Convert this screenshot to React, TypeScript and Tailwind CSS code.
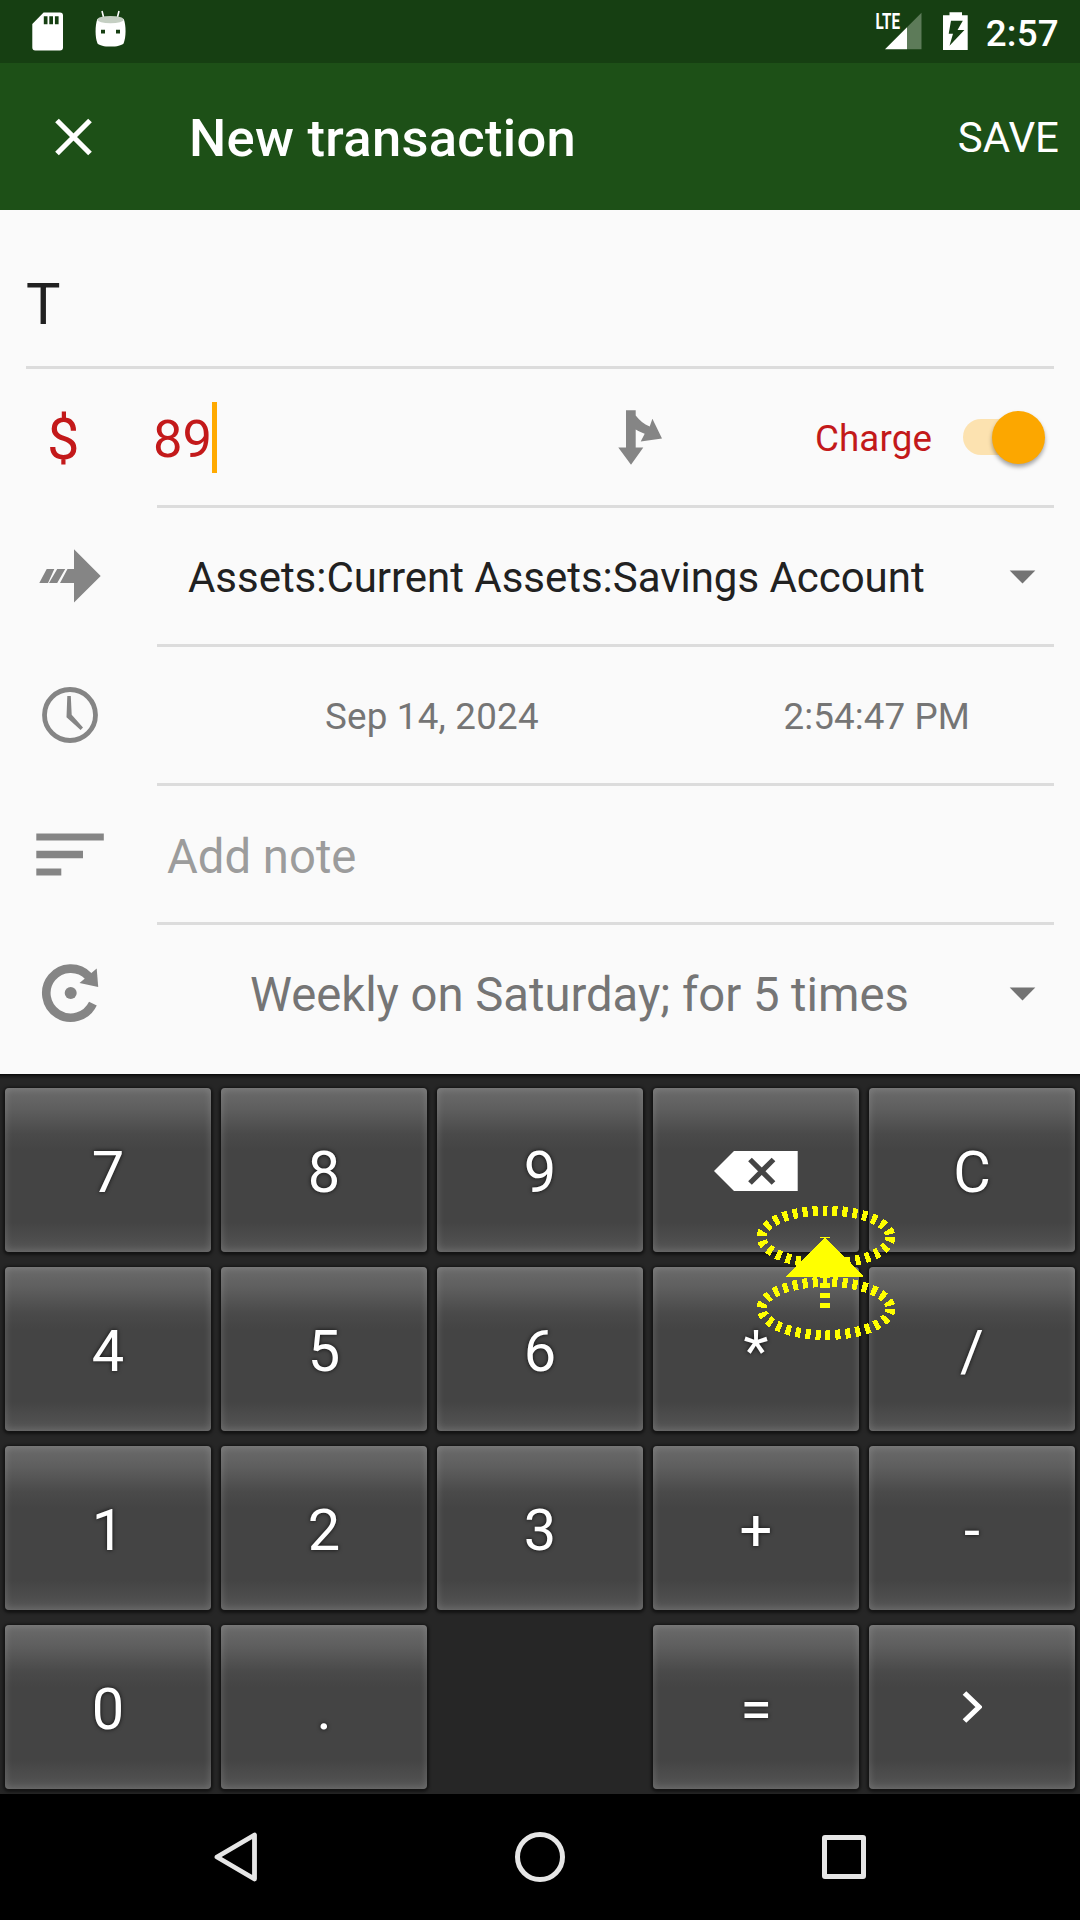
import type { ReactNode } from "react";

function StatusBar() {
  return (
    <div className="flex h-[63px] items-start bg-[#163f12] text-white">
      <svg className="ml-8 mt-3 h-[39px] w-8 shrink-0" viewBox="32 12 32 39">
        <path
          fill="#fff"
          fillRule="evenodd"
          d="M43.6 12.6H60a3 3 0 0 1 3 3V47.500a3 3 0 0 1-3 3H35.300a3 3 0 0 1-3-3V24zM43.800 16.300v7.900h3.700v-7.900zM49.300 16.300v7.900H53v-7.900zM54.900 16.300v7.900h3.700v-7.900z"
        />
      </svg>
      <svg className="ml-[30px] mt-2.5 h-[38px] w-[34px] shrink-0" viewBox="94 10 34 38">
        <path d="M102 11l2 8M119 11l-2 8" stroke="#fff" strokeWidth="1.600" />
        <path
          fill="#fff"
          fillRule="evenodd"
          d="M97.300 19C95 26 95 37 97.500 43.500 99.500 45.500 104 46.600 110.500 46.600S121.500 45.500 123.600 43.500C126.200 37 126.200 26 123.800 19zM101 29.700h4v3.700h-4zM116 29.700h4v3.700h-4z"
        />
        <ellipse cx="110.500" cy="19.600" rx="13.300" ry="3.700" fill="#c5cfc3" />
      </svg>
      <div className="flex-1" />
      <svg className="mt-1 h-[47px] w-[54px] shrink-0" viewBox="868 4 54 47">
        <path d="M907 27.300L921.500 12.800V49.300H907z" fill="#5d7b59" />
        <path d="M885 49.300L907 27.300V49.300z" fill="#fff" />
        <text
          x="875.500"
          y="29.200"
          textLength="24.500"
          lengthAdjust="spacingAndGlyphs"
          className="fill-white font-[Roboto] text-[22px] font-bold"
        >
          LTE
        </text>
      </svg>
      <svg className="ml-[21px] mt-3 h-[39px] w-[26px] shrink-0" viewBox="943 12 26 39">
        <path
          fill="#fff"
          fillRule="evenodd"
          d="M949.500 12.200h12.500v3h5.700V50H943V15.200h6.500zM951 20.700L948.700 33.700H953L949.500 45.700 964.400 30H957.500L962.800 20.700z"
        />
      </svg>
      <span className="ml-[17px] mr-[21px] mt-[13px] text-[36.75px] leading-[42px] font-medium tracking-[0.25px]">2:57</span>
    </div>
  );
}

function AppBar() {
  return (
    <div className="flex h-[147px] items-center bg-[#1d5017] text-white">
      <svg className="ml-[54px] h-[38px] w-[38px] shrink-0" viewBox="54 117.500 38 38">
        <path d="M57 120l33 33M90 120l-33 33" stroke="#fff" strokeWidth="5.200" fill="none" />
      </svg>
      <h1 className="ml-[97px] mt-[3px] flex-1 text-[52.5px] leading-[60px] font-medium tracking-[0.3px]">New transaction</h1>
      <span className="mr-[21px] mt-[3px] text-[42px] leading-[48px]">SAVE</span>
    </div>
  );
}

function Caret() {
  return (
    <svg className="mr-[18px] mt-px h-[14px] w-[27px] shrink-0" viewBox="0 0 27 14">
      <path d="M.700.500h25.600L13.500 13.500z" fill="#737373" />
    </svg>
  );
}

function Row({ icon, children, last = false }: { icon: ReactNode; children: ReactNode; last?: boolean }) {
  return (
    <div className="flex h-[139px] pr-[26px]">
      <div className="flex h-[136px] w-[157px] shrink-0 items-center">{icon}</div>
      <div
        className={
          last
            ? "flex h-[136px] flex-1 items-center"
            : "flex flex-1 items-center border-b-[3px] border-[#dcdcdc]"
        }
      >
        {children}
      </div>
    </div>
  );
}

const arrowIcon = (
  <svg className="ml-[39px] h-[54px] w-[62px]" viewBox="39 549 62 54">
    <path
      fill="#858585"
      d="M74 549.300L100.700 576 74 602.500V583H60L67.500 569H74zM46.700 569h7.600L48 583H39.300zM57.200 569h8L57.200 583H49z"
    />
  </svg>
);

const clockIcon = (
  <svg className="ml-[42px] h-14 w-14" viewBox="42 687 56 56">
    <circle cx="70" cy="715" r="25.500" fill="none" stroke="#858585" strokeWidth="4.800" />
    <path fill="#858585" d="M67.300 696h3.500l.900 18.700L83 727.500 80.600 730 66.500 717.300z" />
  </svg>
);

const noteIcon = (
  <svg className="ml-9 mt-px h-[43px] w-[68px]" viewBox="0 0 68 43">
    <path fill="#858585" d="M.300.500h67.500v7H.300zM.300 17.700H47v7.500H.300zM.300 35.500h25v7H.300z" />
  </svg>
);

const recurIcon = (
  <svg className="ml-[41px] h-[60px] w-[60px]" viewBox="41 963 60 60">
    <path
      d="M92.900 1003.700A24.500 24.500 0 1 1 88.500 976.200"
      fill="none"
      stroke="#858585"
      strokeWidth="8.600"
    />
    <path fill="#858585" d="M96.700 968.500L98.200 987 79.500 983z" />
    <circle cx="70.700" cy="993" r="6" fill="#858585" />
  </svg>
);

function Form() {
  return (
    <div className="h-[864px] bg-[#fafafa] text-[#212121]">
      <div className="mx-[26px] flex h-[159px] items-center border-b-[3px] border-[#dcdcdc]">
        <span className="mt-[31px] text-[57.75px] leading-[66px]">T</span>
      </div>
      <Row
        icon={<span className="ml-[47px] mt-1 text-[57.75px] leading-[66px] text-[#c3191a]">$</span>}
      >
        <span className="-ml-1 mt-1 text-[52.5px] leading-[60px] text-[#c3191a]">89</span>
        <span className="h-[71px] w-[5px] bg-[#ffaa00]" />
        <svg className="ml-[401px] h-[55px] w-[45px] shrink-0" viewBox="618 409.500 45 55">
          <path
            fill="#858585"
            d="M626 409.700h9.700V415c4 5 8 8.500 14 11l2.700-7.700L662 438 640.700 441l4-7.700c-3.500-1.200-6-2.500-9-4.300V447h7.600L631 464.300 618.300 447H626z"
          />
        </svg>
        <div className="flex-1" />
        <span className="mt-[3px] text-[36.75px] leading-[42px] tracking-[0.1px] text-[#c3191a]">Charge</span>
        <div className="relative ml-[31px] mr-[7px] h-[53px] w-[84px]">
          <div className="mt-2 h-9 w-[76px] rounded-full bg-[#fce2b0]" />
          <div className="absolute right-0.5 top-0 size-[53px] rounded-full bg-[#fca700] shadow-[0_3px_4px_rgba(0,0,0,0.35)]" />
        </div>
      </Row>
      <Row icon={arrowIcon}>
        <span className="ml-[31px] mt-[3px] flex-1 text-[42px] leading-[48px] tracking-[-0.03px] whitespace-nowrap">
          Assets:Current Assets:Savings Account
        </span>
        <Caret />
      </Row>
      <Row icon={clockIcon}>
        <span className="ml-[168px] mt-[3px] flex-1 text-[36.75px] leading-[42px] tracking-[0.2px] text-[#757575]">Sep 14, 2024</span>
        <span className="mr-[84px] mt-[3px] text-[36.75px] leading-[42px] tracking-[0.1px] text-[#757575]">2:54:47 PM</span>
      </Row>
      <Row icon={noteIcon}>
        <span className="ml-2.5 mt-[5px] text-[47.25px] leading-[54px] text-[#9c9c9c]">Add note</span>
      </Row>
      <Row icon={recurIcon} last>
        <span className="ml-[93px] mt-[4px] flex-1 text-[47.25px] leading-[54px] tracking-[-0.03px] whitespace-nowrap text-[#757575]">
          Weekly on Saturday; for 5 times
        </span>
        <Caret />
      </Row>
    </div>
  );
}

const backspace = (
  <svg className="mt-px mr-px h-[42px] w-[84px]" viewBox="714 1150 84 42">
    <path d="M714 1171l20-20h63.700v40H734z" fill="#fff" />
    <path d="M750 1159.500l23.500 23.500M773.500 1159.500l-23.500 23.500" stroke="#454545" strokeWidth="5.200" />
  </svg>
);

const chevron = (
  <svg className="h-8 w-5" viewBox="962 1690.700 20 32">
    <path d="M964.500 1692.700l14.500 14-14.500 14" fill="none" stroke="#fff" strokeWidth="5.200" />
  </svg>
);

const keys: ReactNode[] = [
  "7", "8", "9", backspace, "C",
  "4", "5", "6", "*", "/",
  "1", "2", "3", "+", "-",
  "0", ".", null, "=", chevron,
];

function Key({ children }: { children: ReactNode }) {
  const isText = typeof children === "string";
  return (
    <div className="flex h-[164px] items-center justify-center rounded-[4px] bg-[linear-gradient(#6b6b6b_0%,#5e5e5e_13%,#4a4a4a_28%,#444_38%,#444_82%,#4e4e4e_93%,#585858_100%)] text-[57.75px] text-white shadow-[0_1px_3px_2px_rgba(0,0,0,0.5),inset_0_0_7px_1px_rgba(255,255,255,0.15)]">
      {isText ? (
        <span className="mt-1 leading-[66px] [text-shadow:0_0_4px_rgba(0,0,0,0.8)]">{children}</span>
      ) : (
        children
      )}
    </div>
  );
}

function Gesture() {
  return (
    <svg
      className="pointer-events-none absolute left-[750px] top-[1200px] h-[145px] w-[150px]"
      viewBox="750 1200 150 145"
      shapeRendering="crispEdges"
      fill="none"
      stroke="#ff0"
      strokeWidth="10"
    >
      <ellipse cx="826" cy="1308.500" rx="64.500" ry="26.500" strokeDasharray="5 5" />
      <ellipse cx="826" cy="1237" rx="64.500" ry="26.500" strokeDasharray="5 5" />
      <path d="M825 1308V1237" strokeDasharray="5 5" />
      <path d="M825 1237.500L864 1277H785.700z" fill="#ff0" stroke="none" />
    </svg>
  );
}

function Keypad() {
  return (
    <div className="h-[720px] bg-[linear-gradient(#080808_0px,#1a1a1a_2px,#262626_5px)] px-[5px] pt-3.5">
      <div className="grid grid-cols-5 gap-x-2.5 gap-y-[15px]">
        {keys.map((k, i) => (k === null ? <div key={i} /> : <Key key={i}>{k}</Key>))}
      </div>
    </div>
  );
}

function NavBar() {
  return (
    <div className="flex h-[126px] items-center bg-black pl-[213px]">
      <svg className="h-[52px] w-[46px]" viewBox="213 1831 46 52">
        <path
          d="M254.500 1835V1879L217 1857z"
          fill="none"
          stroke="#e6e6e6"
          strokeWidth="4.800"
          strokeLinejoin="round"
        />
      </svg>
      <div className="ml-[256px] size-[50px] rounded-full border-[5px] border-[#e6e6e6]" />
      <div className="ml-[257px] size-[44px] rounded-[3px] border-[5px] border-[#e6e6e6]" />
    </div>
  );
}

export default function App() {
  return (
    <div className="relative h-[1920px] w-[1080px] overflow-hidden font-[Roboto,sans-serif]">
      <StatusBar />
      <AppBar />
      <Form />
      <Keypad />
      <NavBar />
      <Gesture />
    </div>
  );
}
